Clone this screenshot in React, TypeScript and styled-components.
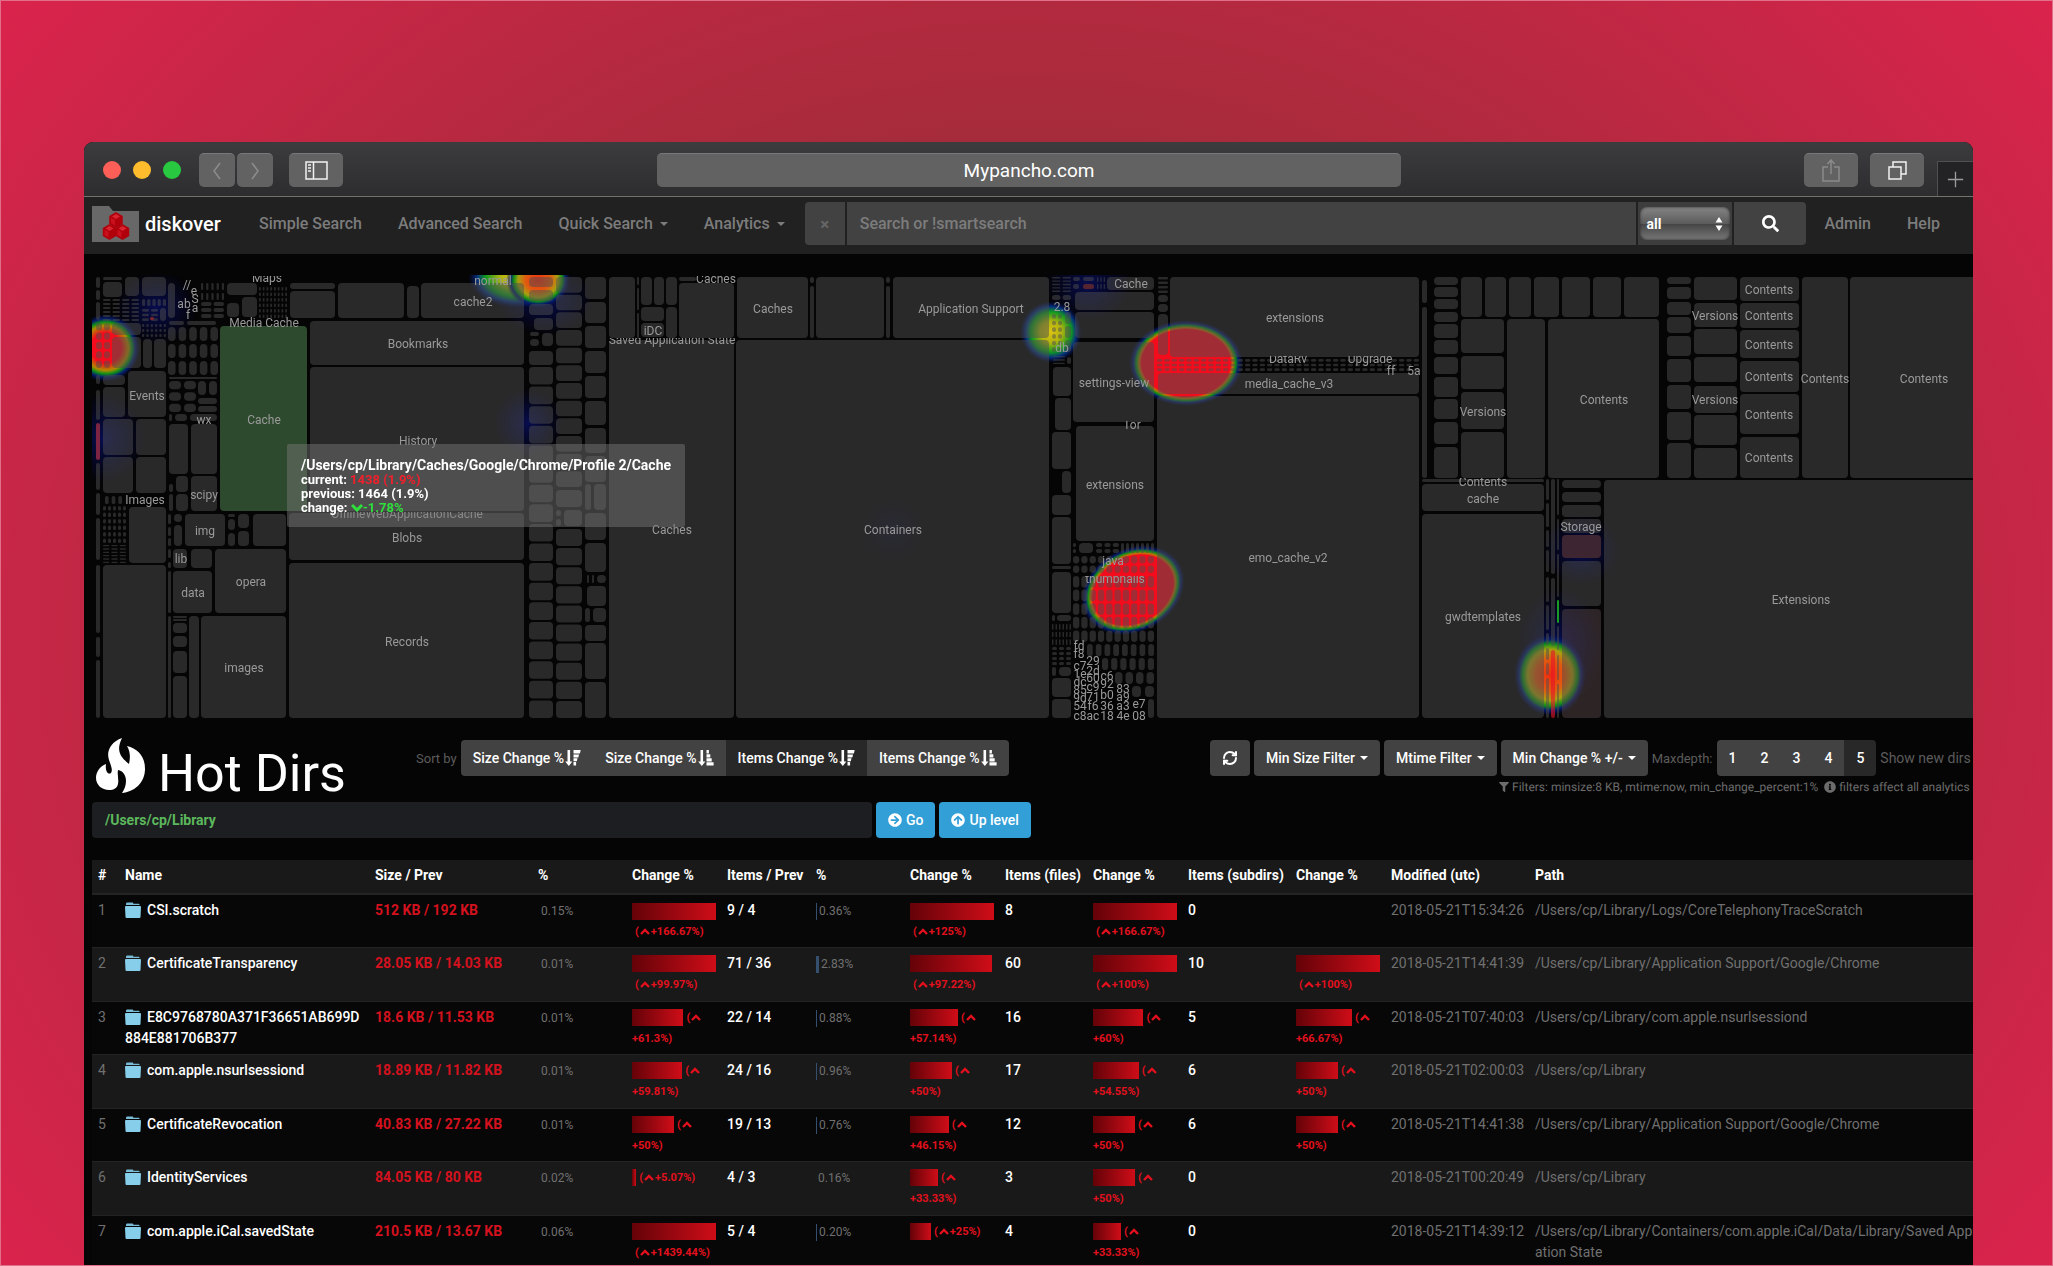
import React from "react";
import styled, { createGlobalStyle } from "styled-components";
import {
  FaArrowCircleRight,
  FaArrowCircleUp,
  FaFilter,
  FaInfoCircle,
  FaSearch,
} from "react-icons/fa";
import { LuRefreshCw } from "react-icons/lu";

const GlobalStyle = createGlobalStyle`
  *, *::before, *::after { box-sizing: border-box; }
  body { margin: 0; background: #c82547; }
  body, button, input, select, table {
    font-family: Roboto, "Liberation Sans", sans-serif;
  }
`;

const Page = styled.div`
  display: flex;
  height: 100vh;
  padding: 141px 79px 0 83px;
  overflow: hidden;
  border: 1px solid #e0708a;
  background: radial-gradient(ellipse 62% 84% at 50% 50%, #9c2c36 0%, #a42c3a 45%, #da234c 100%);
`;

const Window = styled.main`
  display: flex;
  flex: 1;
  flex-direction: column;
  min-width: 0;
  overflow: hidden;
  border-radius: 9px 9px 0 0;
  background: #050505;
  color: #fff;
`;

/* ---------- browser chrome ---------- */

const TitleBar = styled.header`
  display: flex;
  flex: none;
  align-items: center;
  height: 55px;
  padding: 2px 0 0 19px;
  border-bottom: 1px solid #73746e;
  background: linear-gradient(#3c3c3e, #2d2d2f);
`;

const TrafficLights = styled.div`
  display: flex;
  gap: 12px;
  margin-right: 18px;
`;

const Light = styled.span<{ $color: string }>`
  width: 18px;
  height: 18px;
  border-radius: 50%;
  background: ${(p) => p.$color};
`;

const ChromeButton = styled.button<{ $width: number; $dim?: boolean }>`
  display: flex;
  align-items: center;
  justify-content: center;
  width: ${(p) => p.$width}px;
  height: 34px;
  padding: 0;
  border: 0;
  border-top: 1px solid #78787a;
  border-radius: 5px;
  background: #626262;
  color: ${(p) => (p.$dim ? "#8b8b8b" : "#f2f2f2")};
`;

const HistoryButtons = styled.div`
  display: flex;
  gap: 2px;
  margin-right: 16px;
`;

const AddressBar = styled.input`
  width: 744px;
  height: 34px;
  margin: 0 auto 0 314px;
  border: 0;
  border-top: 1px solid #78787a;
  border-radius: 5px;
  background: #626262;
  color: #fff;
  font-size: 19px;
  text-align: center;
`;

const WindowActions = styled.div`
  display: flex;
  gap: 12px;
`;

const NewTab = styled.button`
  display: flex;
  align-items: center;
  justify-content: center;
  align-self: flex-end;
  width: 36px;
  height: 35px;
  margin-left: 13px;
  padding: 0;
  border: solid #505053;
  border-width: 1px 0 0 1px;
  background: #232326;
  color: #9b9b9b;
`;

/* ---------- navigation ---------- */

const Nav = styled.nav`
  display: flex;
  flex: none;
  align-items: center;
  height: 57px;
  padding: 0 33px 4px 8px;
  background: #212121;
`;

const Brand = styled.a`
  display: flex;
  align-items: center;
  gap: 6px;
  width: 167px;
  color: #fff;
  font-size: 20px;
  font-weight: 500;
  text-decoration: none;
`;

const NavLink = styled.a`
  display: flex;
  align-items: center;
  gap: 7px;
  margin-right: 36px;
  color: #7c7c7c;
  font-size: 16px;
  font-weight: 500;
  text-decoration: none;
  white-space: nowrap;

  &:last-child { margin-right: 0; }
`;

const Caret = styled.span`
  display: inline-block;
  border: solid transparent;
  border-width: 4px 4px 0;
  border-top-color: currentColor;
`;

const SearchGroup = styled.form`
  display: flex;
  flex: 1;
  gap: 2px;
  height: 43px;
  margin: 0 18px 0 -16px;
  overflow: hidden;
  border-radius: 4px;
`;

const ClearButton = styled.button`
  width: 40px;
  padding: 0;
  border: 0;
  background: #424242;
  color: #666;
  font-size: 17px;
  font-weight: 700;
`;

const SearchInput = styled.input`
  flex: 1;
  min-width: 0;
  padding: 0 13px;
  border: 0;
  background: #424242;
  color: #ddd;
  font-size: 16px;
  font-weight: 500;

  &::placeholder { color: #7c7c7c; opacity: 1; }
`;

const SelectBox = styled.div`
  position: relative;
  display: flex;
  align-items: center;
  width: 94px;
  padding: 0 2px;
  background: #3d3d3d;
`;

const TypeSelect = styled.select`
  width: 100%;
  height: 33px;
  padding: 0 6px;
  appearance: none;
  border: 0;
  border-radius: 7px;
  background: linear-gradient(#858585 0%, #5c5c5c 50%, #454545 52%, #787878 100%);
  box-shadow: inset 0 0 3px #2c2c2c;
  color: #fff;
  font-size: 14px;
  font-weight: 700;
`;

const SelectArrows = styled.svg`
  position: absolute;
  top: 15px;
  right: 9px;
  pointer-events: none;
`;

const SearchButton = styled.button`
  display: flex;
  align-items: center;
  justify-content: center;
  width: 72px;
  border: 0;
  background: #424242;
  color: #fff;
  font-size: 17px;
`;

/* ---------- treemap ---------- */

const TreemapPanel = styled.section`
  position: relative;
  flex: none;
  height: 472px;
`;

const Chart = styled.svg`
  display: block;
  width: 100%;
  height: 100%;

  text {
    fill: #9a9a9a;
    font-family: Roboto, "Liberation Sans", sans-serif;
    font-size: 12px;
    text-anchor: middle;
  }
`;

const Tooltip = styled.div`
  position: absolute;
  top: 190px;
  left: 203px;
  width: 398px;
  height: 83px;
  padding: 13px 14px;
  border-radius: 2px;
  background: rgba(120, 120, 120, 0.48);
  font-size: 13px;
  font-weight: 700;
  line-height: 14px;
  white-space: nowrap;
`;

const TooltipPath = styled.div`
  font-size: 14px;
  line-height: 16px;
`;

const TipValue = styled.span<{ $color: string }>`
  color: ${(p) => p.$color};
`;

type Box = [number, number, number, number];

/* A column of cells between two x positions, one cell for each [top, bottom] pair. */
const column = (x1: number, x2: number, ys: number[]): Box[] => {
  const out: Box[] = [];
  for (let i = 0; i < ys.length; i += 2) out.push([x1, ys[i], x2, ys[i + 1]]);
  return out;
};

/* An even grid of cells that fills a box. */
const grid = (x1: number, y1: number, x2: number, y2: number, cols: number, rows: number, gap = 2): Box[] => {
  const out: Box[] = [];
  const w = (x2 - x1 + gap) / cols;
  const h = (y2 - y1 + gap) / rows;
  for (let r = 0; r < rows; r++)
    for (let c = 0; c < cols; c++)
      out.push([x1 + c * w, y1 + r * h, x1 + (c + 1) * w - gap, y1 + (r + 1) * h - gap]);
  return out;
};

const cells: Box[] = [
  ...column(96, 100, [277, 288, 290, 300, 302, 320, 375, 384, 390, 420, 463, 490, 493, 515, 518, 560, 565, 633, 637, 657, 660, 718]),
  [103, 277, 122, 280], [103, 282, 122, 297], [125, 277, 139, 296], [142, 277, 166, 296],
  ...grid(103, 299, 139, 321, 4, 6), ...grid(142, 299, 166, 306, 5, 1), ...grid(142, 309, 158, 321, 2, 3),
  [160, 308, 166, 321], [112, 323, 141, 335], ...grid(142, 324, 166, 337, 6, 3), [112, 337, 141, 368],
  ...grid(96, 323, 110, 368, 2, 5), [143, 339, 152, 368], [154, 339, 166, 368],
  [103, 375, 125, 385], [103, 387, 125, 417], [128, 371, 166, 417],
  [103, 419, 133, 455], [136, 419, 166, 455], [103, 457, 133, 493], [136, 457, 166, 493],
  ...grid(105, 496, 122, 504, 3, 1, 3), [129, 507, 166, 563],
  ...grid(103, 506, 126, 543, 5, 6), ...grid(103, 545, 126, 563, 3, 6), [103, 565, 166, 718],

  [168, 283, 175, 318], ...grid(201, 283, 224, 300, 5, 2, 3), ...grid(201, 302, 224, 318, 2, 3),
  [227, 283, 257, 295], [227, 303, 239, 317], [242, 297, 257, 317], ...grid(259, 287, 287, 318, 8, 6),
  [290, 283, 335, 289], [290, 291, 335, 318], [338, 283, 404, 318], [407, 286, 419, 318], [421, 283, 524, 318],
  [169, 321, 184, 325], [187, 321, 216, 325], ...grid(168, 327, 218, 375, 5, 3, 3), [169, 377, 217, 379],
  ...grid(169, 381, 196, 412, 2, 3, 3), [198, 381, 206, 395], [209, 381, 217, 395], [198, 398, 217, 404],
  [198, 406, 217, 412], [169, 414, 172, 421], [175, 414, 187, 421], [190, 414, 217, 421],
  [169, 424, 188, 474], [191, 424, 217, 474], [176, 476, 188, 492], [176, 494, 188, 511], [191, 476, 217, 511],
  ...column(169, 173, [484, 492, 494, 511]),
  ...column(168, 171, [514, 524, 527, 536, 538, 546, 549, 558, 562, 568, 571, 613, 616, 718]),
  [310, 321, 524, 365], [310, 367, 524, 511], [289, 513, 524, 560], [289, 563, 524, 718],
  [174, 514, 182, 522], [174, 525, 182, 546], [185, 514, 225, 546], [228, 514, 235, 517], [228, 519, 235, 530],
  [228, 533, 235, 546], [238, 514, 249, 528], [238, 531, 249, 546], [253, 514, 286, 546],
  [173, 549, 187, 568], [191, 549, 212, 568], [173, 571, 212, 613], [215, 549, 286, 613],
  ...column(173, 187, [616, 618, 619, 621, 623, 633, 636, 647, 651, 673, 676, 718]),
  [189, 616, 199, 718], [201, 616, 286, 718],

  ...column(529, 553, [277, 287, 290, 301, 304, 315]),
  [534, 318, 553, 330], [530, 332, 539, 336], [530, 339, 539, 346], [542, 333, 553, 346], [529, 351, 553, 365],
  ...grid(529, 367, 553, 718, 1, 18),
  ...grid(556, 277, 582, 487, 1, 12), [556, 490, 582, 507], [556, 510, 561, 516], [556, 519, 561, 526], [564, 510, 582, 526],
  ...grid(556, 529, 582, 718, 1, 10),
  ...column(585, 606, [277, 299, 302, 323, 326, 348, 351, 373, 376, 398, 401, 425, 428, 453, 456, 482, 513, 540, 543, 572, 643, 679, 682, 718, 625, 641]),
  [585, 484, 591, 510], [594, 484, 606, 510], [587, 575, 589, 583], [592, 575, 594, 583], [597, 575, 606, 583],
  [587, 586, 606, 606], [585, 608, 590, 622], [593, 608, 606, 622],

  [609, 277, 635, 338], ...column(637, 639, [277, 285, 288, 310, 313, 338]),
  [641, 277, 652, 305], [654, 277, 664, 305], [666, 277, 677, 305], [641, 307, 664, 321], [641, 323, 664, 337],
  [666, 307, 677, 338], [679, 277, 696, 281], [679, 283, 734, 338], [609, 340, 734, 718],
  [737, 277, 808, 338], [810, 277, 814, 283], [810, 286, 814, 338], [816, 277, 884, 338],
  [886, 277, 890, 283], [886, 286, 890, 338], [893, 277, 1049, 338], [736, 340, 1049, 718],

  ...grid(1052, 277, 1071, 292, 2, 5), ...grid(1052, 295, 1071, 300, 2, 1), ...grid(1052, 314, 1062, 352, 2, 6),
  ...grid(1065, 312, 1071, 352, 1, 3), ...grid(1053, 356, 1065, 364, 1, 3), [1067, 357, 1071, 364],
  [1053, 367, 1071, 396], [1055, 398, 1071, 430], [1052, 432, 1071, 469], [1062, 471, 1071, 493],
  ...column(1052, 1071, [495, 515, 517, 564, 566, 569, 572, 613, 678, 697, 699, 718]),
  [1052, 615, 1055, 621], [1057, 615, 1071, 621], ...grid(1052, 624, 1071, 645, 6, 3), ...grid(1052, 647, 1071, 665, 3, 4),
  [1052, 667, 1056, 676], [1059, 667, 1071, 676],

  [1073, 277, 1080, 281], [1073, 284, 1079, 289], [1083, 277, 1094, 281], ...grid(1097, 277, 1105, 289, 3, 2),
  [1107, 277, 1154, 290], [1075, 292, 1154, 310], [1075, 312, 1154, 338], [1073, 342, 1154, 422], [1076, 426, 1154, 541],
  ...grid(1073, 543, 1076, 553, 1, 2), [1079, 543, 1093, 553], ...grid(1096, 543, 1119, 553, 3, 2), ...grid(1121, 543, 1154, 553, 7, 1),
  ...grid(1073, 556, 1154, 573, 10, 2), ...grid(1073, 576, 1154, 642, 10, 5), ...grid(1087, 644, 1154, 656, 8, 1, 3),
  ...grid(1102, 658, 1154, 670, 6, 1, 3), ...grid(1115, 672, 1154, 684, 4, 1, 3), [1132, 686, 1141, 697], [1145, 686, 1154, 697],
  [1148, 699, 1154, 718],
  ...grid(1158, 277, 1168, 293, 1, 4), [1158, 295, 1168, 302], [1158, 304, 1168, 312], [1158, 314, 1168, 355],
  [1170, 277, 1419, 357], ...grid(1157, 359, 1419, 371, 36, 3), [1158, 373, 1419, 394], [1157, 396, 1419, 718],

  [1422, 280, 1427, 303], [1422, 307, 1427, 478],
  ...column(1434, 1458, [277, 285, 287, 297, 299, 309, 312, 322, 324, 338, 340, 354, 357, 374, 377, 397, 399, 419, 422, 444, 447, 478]),
  [1461, 277, 1482, 317], [1485, 277, 1506, 317], [1509, 277, 1531, 317], [1534, 277, 1559, 317],
  [1562, 277, 1590, 317], [1593, 277, 1621, 317], [1624, 277, 1659, 317],
  ...column(1461, 1504, [319, 353, 356, 389, 392, 429, 432, 478]), [1507, 319, 1545, 478], [1548, 319, 1659, 478],
  ...column(1667, 1691, [277, 284, 287, 299, 302, 315, 317, 333, 336, 356, 359, 382, 385, 409, 412, 440, 443, 478]),
  ...column(1694, 1737, [277, 300, 303, 327, 329, 354, 357, 382, 386, 413, 415, 445, 448, 478]),
  ...column(1740, 1799, [277, 301, 303, 328, 330, 358, 361, 392, 394, 434, 437, 478]),
  [1802, 277, 1848, 478], [1850, 277, 2400, 478],
  [1422, 479, 1544, 482], [1422, 484, 1544, 511], [1422, 514, 1544, 718],
  ...column(1546, 1549, [479, 500, 503, 527, 530, 547, 550, 572, 577, 602, 605, 630, 633, 645, 648, 660, 663, 675, 678, 718]),
  ...column(1551, 1555, [479, 574, 578, 646]), ...column(1557, 1559, [479, 515, 519, 550, 554, 597, 626, 650, 655, 680, 684, 718]),
  ...column(1562, 1601, [480, 488, 492, 502, 505, 517, 519, 533, 561, 606]), [1604, 480, 2400, 718],
];

const changed: { box: Box; fill: string }[] = [
  { box: [220, 326, 307, 511], fill: "#2e4a2e" },
  { box: [96, 423, 100, 460], fill: "#7d2442" },
  { box: [1083, 284, 1094, 289], fill: "#562431" },
  { box: [1562, 535, 1601, 558], fill: "#3e2532" },
  { box: [1562, 609, 1601, 718], fill: "rgba(86,70,70,0.5)" },
  { box: [1557, 600, 1559, 623], fill: "#179a26" },
  { box: [1551, 650, 1555, 718], fill: "rgba(230,20,40,0.6)" },
  { box: [150, 317, 154, 320], fill: "#7d2430" },
];

/* Centre x, centre y and text of each label. */
const labels: [number, number, string][] = [
  [147, 396, "Events"], [204, 420, "wx"], [264, 420, "Cache"], [264, 323, "Media Cache"], [418, 344, "Bookmarks"],
  [418, 441, "History"], [407, 538, "Blobs"], [407, 642, "Records"], [473, 302, "cache2"], [493, 281, "normal"],
  [145, 500, "Images"], [204, 495, "scipy"], [205, 531, "img"], [181, 559, "lib"], [193, 593, "data"],
  [251, 582, "opera"], [244, 668, "images"], [184, 304, "ab"], [188, 315, "f"], [187, 285, "//"], [194, 291, "e"], [195, 299, "S"], [195, 308, "a"],
  [653, 331, "iDC"], [773, 309, "Caches"], [971, 309, "Application Support"], [672, 530, "Caches"], [893, 530, "Containers"],
  [1062, 307, "2.8"], [1062, 348, "db"], [1131, 284, "Cache"], [1114, 383, "settings-view"], [1115, 485, "extensions"],
  [1295, 318, "extensions"], [1289, 384, "media_cache_v3"], [1288, 558, "emo_cache_v2"], [1391, 371, "ff"], [1414, 371, "5a"],
  [1113, 561, "java"], [1079, 646, "fd"], [1079, 654, "f8"],
  [1080, 666, "c7"], [1093, 661, "29"], [1080, 674, "1e"], [1093, 671, "2d"], [1080, 682, "dc"], [1093, 678, "60"], [1107, 676, "c6"],
  [1080, 690, "85"], [1093, 687, "c9"], [1107, 684, "92"], [1123, 689, "83"], [1080, 698, "9d"], [1093, 697, "71"], [1107, 695, "b0"], [1123, 697, "a9"],
  [1080, 706, "54"], [1093, 706, "f6"], [1107, 706, "36"], [1123, 706, "a3"], [1139, 704, "e7"],
  [1080, 716, "c8"], [1093, 716, "ac"], [1107, 716, "18"], [1123, 716, "4e"], [1139, 716, "08"],
  [1483, 412, "Versions"], [1604, 400, "Contents"], [1715, 316, "Versions"], [1715, 400, "Versions"],
  [1769, 290, "Contents"], [1769, 316, "Contents"], [1769, 345, "Contents"], [1769, 377, "Contents"], [1769, 415, "Contents"], [1769, 458, "Contents"],
  [1825, 379, "Contents"], [1924, 379, "Contents"], [1483, 499, "cache"], [1483, 617, "gwdtemplates"], [1581, 527, "Storage"], [1801, 600, "Extensions"],
];

/* Labels partly hidden by a neighbour: centre, text, visible top and bottom. */
const cutLabels: [number, number, string, number, number][] = [
  [267, 278, "Maps", 276, 286], [716, 279, "Caches", 276, 290], [672, 340, "Saved Application State", 338, 348],
  [1132, 425, "Tor", 421, 432], [1288, 359, "DataRv", 356, 368], [1370, 359, "Upgrade", 356, 368],
  [1483, 482, "Contents", 478, 490], [407, 514, "OfflineWebApplicationCache", 512, 522], [1115, 579, "thumbnails", 576, 583],
];

const Heat = () => (
  <g clipPath="url(#map)">
    <g opacity={0.7}>
      <ellipse cx={156} cy={308} rx={42} ry={38} fill="url(#haze)" />
      <ellipse cx={104} cy={438} rx={42} ry={46} fill="url(#haze)" />
      <ellipse cx={528} cy={423} rx={36} ry={36} fill="url(#haze)" />
      <ellipse cx={545} cy={300} rx={50} ry={36} fill="url(#haze)" />
      <ellipse cx={1088} cy={284} rx={45} ry={38} fill="url(#haze)" />
      <ellipse cx={893} cy={530} rx={36} ry={36} fill="url(#haze)" opacity={0.3} />
      <ellipse cx={1581} cy={550} rx={40} ry={36} fill="url(#haze)" />
      <ellipse cx={1560} cy={645} rx={44} ry={60} fill="url(#haze)" />
    </g>
    <circle cx={106} cy={348} r={34} fill="url(#hot)" />
    <ellipse cx={518} cy={276} rx={50} ry={32} fill="url(#mild)" />
    <ellipse cx={538} cy={280} rx={32} ry={28} fill="url(#warm)" />
    <circle cx={1051} cy={332} r={31} fill="url(#mild)" />
    <ellipse cx={1186} cy={363} rx={57} ry={43} fill="url(#hottest)" />
    <ellipse cx={1133} cy={590} rx={54} ry={42} fill="url(#hottest)" transform="rotate(-28 1133 590)" />
    <ellipse cx={1550} cy={675} rx={36} ry={41} fill="url(#warm)" />
  </g>
);

const Cell = ({ box: [x1, y1, x2, y2], fill }: { box: Box; fill: string }) => (
  <rect x={x1} y={y1} width={x2 - x1} height={y2 - y1} rx={Math.min(4, (x2 - x1) / 2, (y2 - y1) / 2)} fill={fill} />
);

const Treemap = () => (
  <Chart role="img" aria-label="Treemap of directories">
    <defs>
      <clipPath id="map"><rect x={92} y={275} width={2300} height={445} /></clipPath>
      <radialGradient id="haze"><stop offset="0" stopColor="#0a1270" /><stop offset="1" stopColor="#060a60" stopOpacity="0" /></radialGradient>
      <radialGradient id="hot">
        <stop offset="0.45" stopColor="#f50c1c" /><stop offset="0.66" stopColor="#b08a00" />
        <stop offset="0.76" stopColor="#109018" /><stop offset="0.86" stopColor="#06206e" /><stop offset="1" stopColor="#06105a" stopOpacity="0" />
      </radialGradient>
      <radialGradient id="hottest">
        <stop offset="0.78" stopColor="#f20c1c" /><stop offset="0.82" stopColor="#c07008" />
        <stop offset="0.87" stopColor="#109018" /><stop offset="0.92" stopColor="#06206e" /><stop offset="1" stopColor="#06105a" stopOpacity="0" />
      </radialGradient>
      <radialGradient id="warm">
        <stop offset="0" stopColor="#f02c10" /><stop offset="0.4" stopColor="#e05c10" /><stop offset="0.62" stopColor="#a8a010" />
        <stop offset="0.76" stopColor="#109018" /><stop offset="0.86" stopColor="#06206e" /><stop offset="1" stopColor="#06105a" stopOpacity="0" />
      </radialGradient>
      <radialGradient id="mild">
        <stop offset="0" stopColor="#dcc410" /><stop offset="0.35" stopColor="#b0b410" /><stop offset="0.65" stopColor="#109a20" />
        <stop offset="0.82" stopColor="#06307e" /><stop offset="1" stopColor="#06105a" stopOpacity="0" />
      </radialGradient>
    </defs>
    <g transform="translate(-84 -254)">
      <Heat />
      {cells.map((box, i) => <Cell key={i} box={box} fill="rgba(77,77,77,0.5)" />)}
      {changed.map((c, i) => <Cell key={i} box={c.box} fill={c.fill} />)}
      {labels.map(([x, y, name], i) => <text key={i} x={x} y={y + 4}>{name}</text>)}
      {cutLabels.map(([x, y, name, top, bottom]) => (
        <svg key={name + x} x={x - 100} y={top} width={200} height={bottom - top}>
          <text x={100} y={y + 4 - top}>{name}</text>
        </svg>
      ))}
    </g>
  </Chart>
);

/* ---------- toolbar ---------- */

const Toolbar = styled.section`
  display: grid;
  flex: none;
  grid-template-columns: 320px 794px auto;
  align-items: start;
  height: 76px;
  padding: 14px 0 0 12px;
  white-space: nowrap;
`;

const Title = styled.h1`
  display: flex;
  align-items: center;
  gap: 13px;
  height: 56px;
  margin: -2px 0 0;
  font-size: 52px;
  font-weight: 400;
  line-height: 56px;
`;

const TitleText = styled.span`
  padding-top: 16px;
`;

const Controls = styled.div`
  display: flex;
  gap: 4px;
  align-items: center;
  color: #5c5c5c;
  font-size: 14px;
`;

const ControlLabel = styled.span<{ $small?: boolean }>`
  font-size: ${(p) => (p.$small ? 13 : 14)}px;
`;

const ButtonGroup = styled.div`
  display: flex;
  overflow: hidden;
  border-radius: 4px;
`;

const ToolButton = styled.button<{ $active?: boolean; $grouped?: boolean }>`
  display: flex;
  align-items: center;
  gap: ${(p) => (p.$grouped ? 1 : 5)}px;
  height: 36px;
  padding: 0 12px;
  border: 0;
  border-radius: ${(p) => (p.$grouped ? 0 : 4)}px;
  background: ${(p) => (p.$active ? "#282828" : "#424242")};
  color: #fff;
  font-size: 14px;
  font-weight: 500;
`;

const FilterNote = styled.p`
  display: flex;
  gap: 3px;
  align-items: center;
  margin: 2px 0 0 289px;
  color: #6c6c6c;
  font-size: 12px;
  line-height: 18px;
  text-rendering: geometricPrecision;

  svg:nth-of-type(2) { margin-left: 3px; }
`;

const PathForm = styled.form`
  display: flex;
  flex: none;
  gap: 4px;
  padding: 0 8px;
`;

const PathInput = styled.input`
  width: 780px;
  height: 36px;
  padding: 0 13px;
  border: 0;
  border-radius: 4px;
  background: #1c1e22;
  color: #5cb85c;
  font-size: 14px;
  font-weight: 700;
`;

const BlueButton = styled.button`
  display: flex;
  align-items: center;
  gap: 4px;
  height: 36px;
  padding: 0 12px;
  border: 0;
  border-radius: 4px;
  background: #339fd7;
  color: #fff;
  font-size: 14px;
  font-weight: 500;
`;

/* ---------- table ---------- */

const TableWrap = styled.section`
  width: calc(100% + 20px);
  margin-top: 22px;
  padding-left: 8px;
`;

const Table = styled.table`
  width: 100%;
  border-collapse: collapse;
  table-layout: fixed;
  font-size: 14px;
  line-height: 21px;
`;

const HeadCell = styled.th`
  height: 34px;
  padding: 0 5px 3px 6px;
  border-bottom: 2px solid #242424;
  background: #191919;
  font-weight: 700;
  text-align: left;
  white-space: nowrap;
`;

const Row = styled.tr`
  height: 53px;
  background: #070707;

  &:nth-child(even) {
    height: 54px;
    background: #191919;
  }
`;

const DataCell = styled.td<{ $tone?: "muted" | "red" | "small"; $breakAll?: boolean }>`
  padding: ${(p) => (p.$tone === "small" ? "6px" : "5px")} 5px 3px 6px;
  border-top: 1px solid #232323;
  color: ${(p) => (p.$tone === "red" ? "#d4111e" : p.$tone ? "#707070" : "#fff")};
  font-size: ${(p) => (p.$tone === "small" ? 12 : 14)}px;
  font-weight: ${(p) => (p.$tone === "red" ? 700 : p.$tone ? 400 : 500)};
  vertical-align: top;
  white-space: ${(p) => (p.$breakAll ? "normal" : "nowrap")};
  word-break: ${(p) => (p.$breakAll ? "break-all" : "normal")};
`;

const ChangeCell = styled(DataCell)`
  color: #e3101d;
  font-size: 11px;
  font-weight: 700;
  white-space: normal;
`;

const ChangeBar = styled.span`
  display: inline-block;
  height: 17px;
  background: linear-gradient(90deg, #640208, #cf0d18);
  vertical-align: middle;
`;

const ChangeText = styled.span`
  padding-left: 3px;
`;

const ShareBar = styled.span`
  display: inline-block;
  height: 17px;
  margin-right: 2px;
  background: #34506e;
  vertical-align: middle;
`;

const FolderIcon = styled.svg`
  margin-right: 6px;
  vertical-align: -3px;
`;

const UpMark = styled.svg`
  margin: 0 1px;
  vertical-align: 0;
`;

const columns: [string, number | undefined][] = [
  ["#", 27], ["Name", 250], ["Size / Prev", 163], ["%", 94], ["Change %", 95], ["Items / Prev", 89], ["%", 94],
  ["Change %", 95], ["Items (files)", 88], ["Change %", 95], ["Items (subdirs)", 108], ["Change %", 95],
  ["Modified (utc)", 144], ["Path", undefined],
];

type Entry = {
  name: string; size: string; pct: string; sizeChange: number; items: string; itemsPct: string; itemsChange: number;
  files: number; filesChange: number; subdirs: number; subdirsChange?: number; modified: string; path: string;
};

const entries: Entry[] = [
  { name: "CSI.scratch", size: "512 KB / 192 KB", pct: "0.15%", sizeChange: 166.67, items: "9 / 4", itemsPct: "0.36%", itemsChange: 125, files: 8, filesChange: 166.67, subdirs: 0, modified: "2018-05-21T15:34:26", path: "/Users/cp/Library/Logs/CoreTelephonyTraceScratch" },
  { name: "CertificateTransparency", size: "28.05 KB / 14.03 KB", pct: "0.01%", sizeChange: 99.97, items: "71 / 36", itemsPct: "2.83%", itemsChange: 97.22, files: 60, filesChange: 100, subdirs: 10, subdirsChange: 100, modified: "2018-05-21T14:41:39", path: "/Users/cp/Library/Application Support/Google/Chrome" },
  { name: "E8C9768780A371F36651AB699D884E881706B377", size: "18.6 KB / 11.53 KB", pct: "0.01%", sizeChange: 61.3, items: "22 / 14", itemsPct: "0.88%", itemsChange: 57.14, files: 16, filesChange: 60, subdirs: 5, subdirsChange: 66.67, modified: "2018-05-21T07:40:03", path: "/Users/cp/Library/com.apple.nsurlsessiond" },
  { name: "com.apple.nsurlsessiond", size: "18.89 KB / 11.82 KB", pct: "0.01%", sizeChange: 59.81, items: "24 / 16", itemsPct: "0.96%", itemsChange: 50, files: 17, filesChange: 54.55, subdirs: 6, subdirsChange: 50, modified: "2018-05-21T02:00:03", path: "/Users/cp/Library" },
  { name: "CertificateRevocation", size: "40.83 KB / 27.22 KB", pct: "0.01%", sizeChange: 50, items: "19 / 13", itemsPct: "0.76%", itemsChange: 46.15, files: 12, filesChange: 50, subdirs: 6, subdirsChange: 50, modified: "2018-05-21T14:41:38", path: "/Users/cp/Library/Application Support/Google/Chrome" },
  { name: "IdentityServices", size: "84.05 KB / 80 KB", pct: "0.02%", sizeChange: 5.07, items: "4 / 3", itemsPct: "0.16%", itemsChange: 33.33, files: 3, filesChange: 50, subdirs: 0, modified: "2018-05-21T00:20:49", path: "/Users/cp/Library" },
  { name: "com.apple.iCal.savedState", size: "210.5 KB / 13.67 KB", pct: "0.06%", sizeChange: 1439.44, items: "5 / 4", itemsPct: "0.20%", itemsChange: 25, files: 4, filesChange: 33.33, subdirs: 0, modified: "2018-05-21T14:39:12", path: "/Users/cp/Library/Containers/com.apple.iCal/Data/Library/Saved Application State" },
];

const Change = ({ value }: { value?: number }) => (
  <ChangeCell>
    {value !== undefined && (
      <>
        <ChangeBar style={{ width: `${Math.min(value, 100)}%` }} />
        <ChangeText>
          (
          <UpMark width="10" height="7" viewBox="0 0 10 7" aria-hidden="true">
            <path d="M1 6 L5 2 L9 6" fill="none" stroke="currentColor" strokeWidth="2.4" />
          </UpMark>
          +{value}%)
        </ChangeText>
      </>
    )}
  </ChangeCell>
);

const SortIcon = ({ up }: { up?: boolean }) => (
  <svg width="16" height="16" viewBox="0 0 16 16" fill="currentColor" aria-hidden="true">
    <path d="M2.5 0h2.6v11.5H7.4L3.8 16 .2 11.5h2.3z" />
    <path d={up ? "M8.5 0h2.4v3.4H8.5zM8.5 4.2h3.8v3.2H8.5zM8.5 8.2h5.2v3.2H8.5zM8.5 12.2H15.6v3.2H8.5z" : "M8.5 0h7.2l-.8 3.6H8.5zM8.5 4.4h5.6l-.8 3H8.5zM8.5 8.2h4l-.7 3H8.5zM8.5 12h2.6v3.4H8.5z"} />
  </svg>
);

const Folder = () => (
  <FolderIcon width="16" height="16" viewBox="0 0 16 16" aria-hidden="true">
    <path d="M1 3V2q0-1.4 1.4-1.4h5q.8 0 1 1.2h5.2q1 0 1 1.2z" fill="#79bcd8" />
    <path d="M0 5q0-1 1-1h14q1 0 1 1l-.5 10q0 1-1 1h-13q-1 0-1-1z" fill="#87ceeb" />
  </FolderIcon>
);

const Logo = () => (
  <svg width="47" height="37" viewBox="0 0 47 37" aria-hidden="true">
    <path d="M0 1h17l4 5h26v31H0z" fill="#686868" />
    {[[24, 15], [17.5, 27], [30.5, 27]].map(([x, y]) => (
      <g key={x} transform={`translate(${x} ${y})`}>
        <path d="M0-7 6-3.6V3.6L0 7-6 3.6V-3.6z" fill="#b0000c" stroke="#b0000c" strokeWidth="1.5" strokeLinejoin="round" />
        <path d="M0-6 4-3.4 0-1-4-3.4z" fill="#da2430" />
        <path d="M-5-2.4-1 0v5.5L-5 3z" fill="#c9101c" />
      </g>
    ))}
  </svg>
);

const Flame = () => (
  <svg width="49" height="56" viewBox="0 0 49 56" fill="#fff" aria-hidden="true">
    <path d="M26 0C15 4 10 13 13 22c2 6 4 10 2 13-3 2-6-2-5-9C4 28 0 34 0 40c0 7 6 12 13 12 5 0 8-2 9-6 1-5-1-9 0-14 5 1 8 5 8 11 0 5-2 9-4 12 12-1 23-10 23-24C49 18 42 11 31 8c4 7 3 13 2 18-7-6-14-12-7-26z" />
  </svg>
);

const Glyph = ({ d, size = 20, width = 1.6 }: { d: string; size?: number; width?: number }) => (
  <svg width={size} height={size} viewBox="0 0 20 20" fill="none" stroke="currentColor" strokeWidth={width} aria-hidden="true">
    <path d={d} />
  </svg>
);

export default function App() {
  return (
    <>
      <GlobalStyle />
      <Page>
        <Window>
          <TitleBar>
            <TrafficLights>
              <Light $color="#ff5f57" />
              <Light $color="#ffbd2e" />
              <Light $color="#28c940" />
            </TrafficLights>
            <HistoryButtons>
              <ChromeButton $width={36} $dim aria-label="Back"><Glyph d="M13 2 7 10l6 8" /></ChromeButton>
              <ChromeButton $width={36} $dim aria-label="Forward"><Glyph d="M7 2l6 8-6 8" /></ChromeButton>
            </HistoryButtons>
            <ChromeButton $width={54} aria-label="Sidebar">
              <svg width="23" height="19" viewBox="0 0 23 19" fill="none" stroke="currentColor" strokeWidth="1.5" aria-hidden="true">
                <path d="M1 1h21v17H1zM8.500 1v17M3 4h3M3 7h3M3 10h3" />
              </svg>
            </ChromeButton>
            <AddressBar aria-label="Address" defaultValue="Mypancho.com" />
            <WindowActions>
              <ChromeButton $width={54} $dim aria-label="Share">
                <svg width="18" height="23" viewBox="0 0 18 23" fill="none" stroke="currentColor" strokeWidth="1.5" aria-hidden="true">
                  <path d="M6 8H1v14h16V8h-5M9 15V1M5.500 5 9 1l3.500 4" />
                </svg>
              </ChromeButton>
              <ChromeButton $width={54} aria-label="Tabs">
                <svg width="19" height="19" viewBox="0 0 19 19" fill="none" stroke="currentColor" strokeWidth="1.5" aria-hidden="true">
                  <path d="M1 6h12v12H1zM5 6V1h13v12h-5" />
                </svg>
              </ChromeButton>
            </WindowActions>
            <NewTab aria-label="New tab"><Glyph d="M10 1v18M1 10h18" size={17} /></NewTab>
          </TitleBar>

          <Nav>
            <Brand href="#"><Logo />diskover</Brand>
            <NavLink href="#">Simple Search</NavLink>
            <NavLink href="#">Advanced Search</NavLink>
            <NavLink href="#">Quick Search <Caret /></NavLink>
            <NavLink href="#">Analytics <Caret /></NavLink>
            <SearchGroup>
              <ClearButton type="button" aria-label="Clear">×</ClearButton>
              <SearchInput aria-label="Search" placeholder="Search or !smartsearch" />
              <SelectBox>
                <TypeSelect aria-label="Document type" defaultValue="all"><option>all</option></TypeSelect>
                <SelectArrows width="8" height="14" viewBox="0 0 8 14" fill="#fff" aria-hidden="true">
                  <path d="M4 0l3.500 5.500h-7zM4 14l3.500-5.500h-7z" />
                </SelectArrows>
              </SelectBox>
              <SearchButton type="button" aria-label="Run search"><FaSearch /></SearchButton>
            </SearchGroup>
            <NavLink href="#">Admin</NavLink>
            <NavLink href="#">Help</NavLink>
          </Nav>

          <TreemapPanel>
            <Treemap />
            <Tooltip>
              <TooltipPath>/Users/cp/Library/Caches/Google/Chrome/Profile 2/Cache</TooltipPath>
              <div>current: <TipValue $color="#f0202c">1438 (1.9%)</TipValue></div>
              <div>previous: 1464 (1.9%)</div>
              <div>
                change:{" "}
                <TipValue $color="#2fe03c">
                  <svg width="12" height="9" viewBox="0 0 12 9" fill="none" stroke="currentColor" strokeWidth="3" aria-hidden="true">
                    <path d="M1 2l5 5 5-5" />
                  </svg>
                  -1.78%
                </TipValue>
              </div>
            </Tooltip>
          </TreemapPanel>

          <Toolbar>
            <Title><Flame /><TitleText>Hot Dirs</TitleText></Title>
            <Controls>
              <ControlLabel $small>Sort by</ControlLabel>
              <ButtonGroup>
                <ToolButton $grouped>Size Change % <SortIcon /></ToolButton>
                <ToolButton $grouped>Size Change % <SortIcon up /></ToolButton>
                <ToolButton $grouped $active>Items Change % <SortIcon /></ToolButton>
                <ToolButton $grouped>Items Change % <SortIcon up /></ToolButton>
              </ButtonGroup>
            </Controls>
            <div>
              <Controls>
                <ToolButton aria-label="Refresh"><LuRefreshCw size={16} strokeWidth={3} /></ToolButton>
                <ToolButton>Min Size Filter <Caret /></ToolButton>
                <ToolButton>Mtime Filter <Caret /></ToolButton>
                <ToolButton>Min Change % +/- <Caret /></ToolButton>
                <ControlLabel $small>Maxdepth:</ControlLabel>
                <ButtonGroup>
                  {[1, 2, 3, 4, 5].map((n) => (
                    <ToolButton key={n} $grouped $active={n === 5}>{n}</ToolButton>
                  ))}
                </ButtonGroup>
                <ControlLabel>Show new dirs (</ControlLabel>
              </Controls>
              <FilterNote>
                <FaFilter size={10} /> Filters: minsize:8 KB, mtime:now, min_change_percent:1%
                <FaInfoCircle size={12} /> filters affect all analytics pages
              </FilterNote>
            </div>
          </Toolbar>

          <PathForm>
            <PathInput aria-label="Path" defaultValue="/Users/cp/Library" />
            <BlueButton type="button"><FaArrowCircleRight />Go</BlueButton>
            <BlueButton type="button"><FaArrowCircleUp />Up level</BlueButton>
          </PathForm>

          <TableWrap>
            <Table>
              <colgroup>
                {columns.map(([, width], i) => <col key={i} style={{ width }} />)}
              </colgroup>
              <thead>
                <tr>{columns.map(([name], i) => <HeadCell key={i} scope="col">{name}</HeadCell>)}</tr>
              </thead>
              <tbody>
                {entries.map((e, i) => (
                  <Row key={e.name}>
                    <DataCell $tone="muted">{i + 1}</DataCell>
                    <DataCell $breakAll><Folder />{e.name}</DataCell>
                    <DataCell $tone="red">{e.size}</DataCell>
                    <DataCell $tone="small">&nbsp;{e.pct}</DataCell>
                    <Change value={e.sizeChange} />
                    <DataCell>{e.items}</DataCell>
                    <DataCell $tone="small">
                      <ShareBar style={{ width: Math.round(parseFloat(e.itemsPct) + 0.3) }} />
                      {e.itemsPct}
                    </DataCell>
                    <Change value={e.itemsChange} />
                    <DataCell>{e.files}</DataCell>
                    <Change value={e.filesChange} />
                    <DataCell>{e.subdirs}</DataCell>
                    <Change value={e.subdirsChange} />
                    <DataCell $tone="muted">{e.modified}</DataCell>
                    <DataCell $tone="muted" $breakAll>{e.path}</DataCell>
                  </Row>
                ))}
              </tbody>
            </Table>
          </TableWrap>
        </Window>
      </Page>
    </>
  );
}
